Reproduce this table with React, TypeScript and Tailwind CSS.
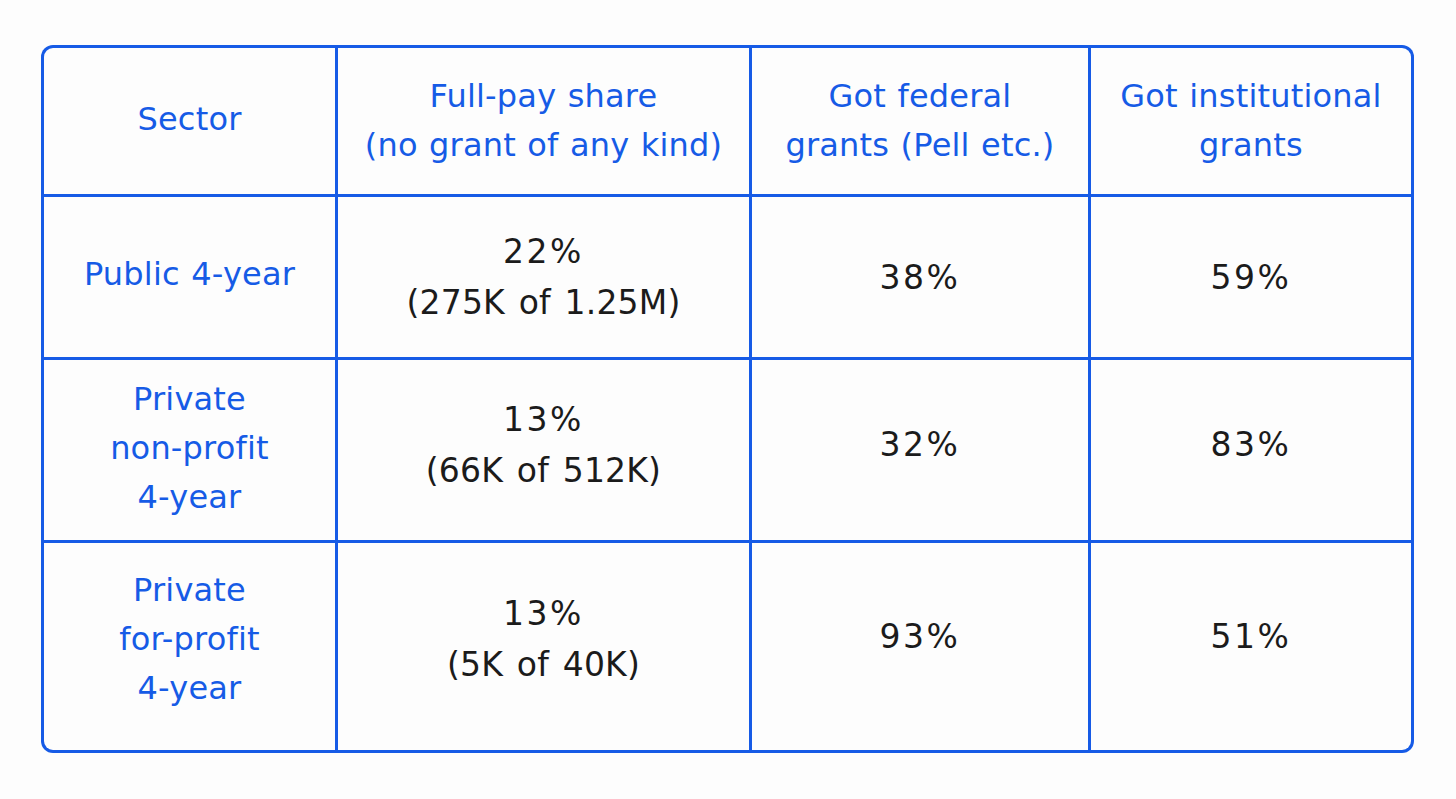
import React from "react";

const BLUE = "text-[#165be6]";

function Cell({
  children,
  className = "",
}: {
  children: React.ReactNode;
  className?: string;
}) {
  return (
    <div
      className={
        "bg-[#fdfdfd] flex flex-col items-center justify-center text-center " +
        className
      }
    >
      {children}
    </div>
  );
}

function Head({ lines }: { lines: string[] }) {
  return (
    <div className={`${BLUE} text-[32px] leading-[49px] tracking-[0.2px] [word-spacing:1px]`}>
      {lines.map((l, i) => (
        <div key={i}>{l}</div>
      ))}
    </div>
  );
}

function Val({ main, sub }: { main: string; sub?: string }) {
  return (
    <div className="text-[#1b1b1b] text-[33px] leading-[51px] [word-spacing:3px]">
      <div className="tracking-[2.5px]">{main}</div>
      {sub && <div className="tracking-[0.2px]">{sub}</div>}
    </div>
  );
}

export default function App() {
  return (
    <div className="w-[1456px] h-[799px] bg-[#fdfdfd] pt-[45px] pl-[41px] font-['DejaVu_Sans',sans-serif] overflow-hidden">
      <div className="w-[1373px] h-[708px] bg-[#165be6] rounded-[12px] p-[3px] grid grid-cols-[291px_411px_336px_320px] grid-rows-[146px_160px_180px_207px] gap-[3px]">
        {/* header */}
        <Cell className="rounded-tl-[9px] pb-[4px]">
          <Head lines={["Sector"]} />
        </Cell>
        <Cell>
          <Head lines={["Full-pay share", "(no grant of any kind)"]} />
        </Cell>
        <Cell>
          <Head lines={["Got federal", "grants (Pell etc.)"]} />
        </Cell>
        <Cell className="rounded-tr-[9px]">
          <Head lines={["Got institutional", "grants"]} />
        </Cell>

        {/* row 1 */}
        <Cell className="pb-[6px]">
          <Head lines={["Public 4-year"]} />
        </Cell>
        <Cell>
          <Val main="22%" sub="(275K of 1.25M)" />
        </Cell>
        <Cell>
          <Val main="38%" />
        </Cell>
        <Cell>
          <Val main="59%" />
        </Cell>

        {/* row 2 */}
        <Cell className="pb-[4px]">
          <Head lines={["Private", "non-profit", "4-year"]} />
        </Cell>
        <Cell className="pb-[10px]">
          <Val main="13%" sub="(66K of 512K)" />
        </Cell>
        <Cell className="pb-[12px]">
          <Val main="32%" />
        </Cell>
        <Cell className="pb-[12px]">
          <Val main="83%" />
        </Cell>

        {/* row 3 */}
        <Cell className="rounded-bl-[9px] pb-[14px]">
          <Head lines={["Private", "for-profit", "4-year"]} />
        </Cell>
        <Cell className="pb-[16px]">
          <Val main="13%" sub="(5K of 40K)" />
        </Cell>
        <Cell className="pb-[20px]">
          <Val main="93%" />
        </Cell>
        <Cell className="rounded-br-[9px] pb-[20px]">
          <Val main="51%" />
        </Cell>
      </div>
    </div>
  );
}
